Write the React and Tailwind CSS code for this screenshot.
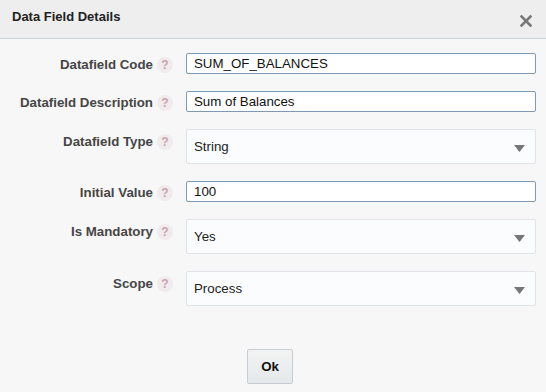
const font = { fontFamily: '"Liberation Sans", Arial, sans-serif' }

function Help() {
  return (
    <span className="ml-[4px] w-[16px] h-[16px] rounded-full bg-[#f1ebed] text-[#c9a3ab] text-[12px] font-bold leading-[16px] text-center shrink-0">
      ?
    </span>
  )
}

function Row({ label, children, select }) {
  return (
    <div className="flex items-start">
      <div className={`w-[186px] pr-[13px] flex items-center justify-end ${select ? 'pt-[5px]' : 'pt-[4px]'}`}>
        <span className="text-[13.3px] font-bold text-[#464646] leading-[16px]">{label}</span>
        <Help />
      </div>
      {children}
    </div>
  )
}

function TextBox({ value }) {
  return (
    <div className="w-[350px] h-[21px] border border-[#7e99b4] rounded-[2px] bg-white px-[7px] text-[13.3px] leading-[19px] text-[#111]">
      {value}
    </div>
  )
}

function SelectBox({ value }) {
  return (
    <div className="w-[350px] h-[35px] border border-[#e0e3e7] rounded-[2px] bg-[#fbfcfd] pl-[7px] pr-[10px] flex items-center justify-between text-[13.3px] text-[#222]">
      <span>{value}</span>
      <svg width="11" height="7" viewBox="0 0 11 7" className="mt-[4px]">
        <polygon points="0,0 11,0 5.5,7" fill="#777" />
      </svg>
    </div>
  )
}

export default function App() {
  return (
    <div className="w-[546px] h-[392px] bg-[#f7f7f7] flex flex-col" style={font}>
      <div className="h-[39px] bg-[#eeeeee] border-b border-[#c8d2db] flex items-center justify-between pl-[12px] pr-[14px] shrink-0">
        <span className="text-[13px] font-bold text-[#222] -mt-[5px]">Data Field Details</span>
        <svg width="12" height="12" viewBox="0 0 12 12" className="mt-[3px]">
          <path d="M1.5 1.5 L10.5 10.5 M10.5 1.5 L1.5 10.5" stroke="#777" strokeWidth="2.6" strokeLinecap="square" />
        </svg>
      </div>
      <div className="flex flex-col gap-[17px] pt-[14px]">
        <Row label="Datafield Code"><TextBox value="SUM_OF_BALANCES" /></Row>
        <Row label="Datafield Description"><TextBox value="Sum of Balances" /></Row>
        <Row label="Datafield Type" select><SelectBox value="String" /></Row>
        <Row label="Initial Value"><TextBox value="100" /></Row>
        <Row label="Is Mandatory" select><SelectBox value="Yes" /></Row>
        <Row label="Scope" select><SelectBox value="Process" /></Row>
      </div>
      <div className="flex justify-center pt-[43px] pr-[6px]">
        <button className="w-[46px] h-[35px] border border-[#c5ccd3] rounded-[2px] bg-gradient-to-b from-[#f3f3f3] to-[#e5e8eb] text-[13.3px] font-bold text-[#111]">
          Ok
        </button>
      </div>
    </div>
  )
}
